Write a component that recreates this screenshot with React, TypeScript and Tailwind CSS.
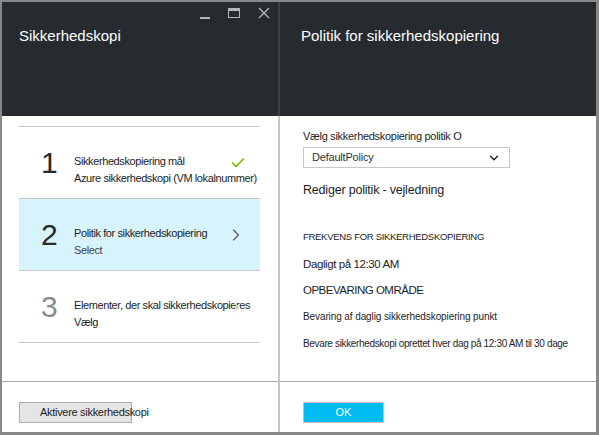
import React from "react";
import { ChevronRight, ChevronDown, Check } from "lucide-react";

const font = { fontFamily: '"Liberation Sans", Arial, sans-serif' };

function Step({
  num,
  title,
  sub,
  active,
  done,
  muted,
}: {
  num: string;
  title: string;
  sub: string;
  active?: boolean;
  done?: boolean;
  muted?: boolean;
}) {
  return (
    <div
      className={
        "relative flex h-[72px] items-center border-b border-[#c8c8c8] " +
        (active ? "bg-[#d7f4fc]" : "")
      }
    >
      <div
        className={
          "w-[55px] pl-[22px] text-[30px] leading-none " +
          (muted ? "text-[#8a8a8a]" : "text-[#2a2a2a]")
        }
      >
        {num}
      </div>
      <div className="mt-[14px] flex flex-col gap-[4px] whitespace-nowrap text-[11px] leading-[13px] tracking-[-0.4px] text-[#1e1e1e]">
        <span>{title}</span>
        <span className={active ? "text-[#444]" : ""}>{sub}</span>
      </div>
      {done && (
        <Check
          size={16}
          strokeWidth={2.5}
          className="absolute right-[14px] top-[28px] text-[#7fba00]"
        />
      )}
      {active && (
        <ChevronRight
          size={20}
          strokeWidth={1.3}
          className="absolute right-[14px] top-[26px] text-[#555]"
        />
      )}
      {muted && (
        <ChevronRight
          size={20}
          strokeWidth={1.3}
          className="absolute right-[14px] top-[26px] text-[#e4e4e4]"
        />
      )}
    </div>
  );
}

export default function App() {
  return (
    <div
      className="flex h-[435px] w-[599px] border-t-2 border-l-2 border-r-[3px] border-b-[3px] border-[#888] bg-white"
      style={font}
    >
      {/* left blade */}
      <div className="flex w-[276px] flex-col">
        <div className="relative h-[114px] bg-[#262b30] px-[17px] pt-[23px] text-[15px] text-white">
          Sikkerhedskopi
          <div className="absolute right-[8px] top-[5px] flex items-center gap-[18px] text-[#b4b7ba]">
            <div className="mt-[10px] h-[2px] w-[10px] bg-[#b4b7ba]" />
            <div className="h-[10px] w-[12px] border border-t-[3px] border-[#b4b7ba]" />
            <svg width="12" height="12" viewBox="0 0 12 12">
              <path d="M1 1L11 11M11 1L1 11" stroke="#b4b7ba" strokeWidth="1.4" />
            </svg>
          </div>
        </div>
        <div className="flex-1 px-[17px] pr-[18px] pt-[10px]">
          <div className="border-t border-[#c8c8c8]">
            <Step
              num="1"
              title="Sikkerhedskopiering mål"
              sub="Azure sikkerhedskopi (VM lokalnummer)"
              done
            />
            <Step
              num="2"
              title="Politik for sikkerhedskopiering"
              sub="Select"
              active
            />
            <Step
              num="3"
              title="Elementer, der skal sikkerhedskopieres"
              sub="Vælg"
              muted
            />
          </div>
        </div>
        <div className="h-[51px] border-t border-[#a8a8a8] px-[17px] pt-[17px]">
          <button className="h-[21px] w-[113px] whitespace-nowrap border border-[#adadad] bg-[#e5e5e5] pl-[20px] text-left text-[11px] tracking-[-0.3px] text-[#1e1e1e]">
            Aktivere sikkerhedskopi
          </button>
        </div>
      </div>

      {/* divider */}
      <div className="flex w-[2px] flex-col">
        <div className="h-[114px] bg-[#3c4146]" />
        <div className="flex-1 bg-[#c6c6c6]" />
      </div>

      {/* right blade */}
      <div className="flex flex-1 flex-col">
        <div className="h-[114px] bg-[#262b30] px-[21px] pt-[23px] text-[15px] text-white">
          Politik for sikkerhedskopiering
        </div>
        <div className="flex-1 whitespace-nowrap px-[23px] pt-[13px] text-[#1e1e1e]">
          <div className="text-[11px] leading-[14px] tracking-[-0.3px]">
            Vælg sikkerhedskopiering politik O
          </div>
          <div className="mt-[4px] flex h-[21px] w-[207px] items-center justify-between border border-[#c8c8c8] px-[8px] text-[11px]">
            <span className="tracking-[-0.2px] text-[#333]">DefaultPolicy</span>
            <ChevronDown size={14} strokeWidth={2.5} className="text-[#222]" />
          </div>
          <div className="mt-[15px] text-[12.5px] leading-[14px] tracking-[-0.2px]">
            Rediger politik - vejledning
          </div>
          <div className="mt-[34px] text-[9.5px] leading-[12px] tracking-[-0.3px] text-[#222]">
            FREKVENS FOR SIKKERHEDSKOPIERING
          </div>
          <div className="mt-[14px] text-[11.5px] leading-[14px] tracking-[-0.4px]">
            Dagligt på 12:30 AM
          </div>
          <div className="mt-[12px] text-[11.5px] leading-[14px] tracking-[-0.5px]">
            OPBEVARING OMRÅDE
          </div>
          <div className="mt-[14px] text-[10px] leading-[12px] tracking-[-0.1px]">
            Bevaring af daglig sikkerhedskopiering punkt
          </div>
          <div className="mt-[15px] text-[10px] leading-[12px] tracking-[-0.35px]">
            Bevare sikkerhedskopi oprettet hver dag på 12:30 AM til 30 dage
          </div>
        </div>
        <div className="h-[51px] border-t border-[#a8a8a8] px-[23px] pt-[17px]">
          <button className="h-[21px] w-[81px] border border-[#c9c0bd] bg-[#00bcf2] text-[11px] text-white">
            OK
          </button>
        </div>
      </div>
    </div>
  );
}
